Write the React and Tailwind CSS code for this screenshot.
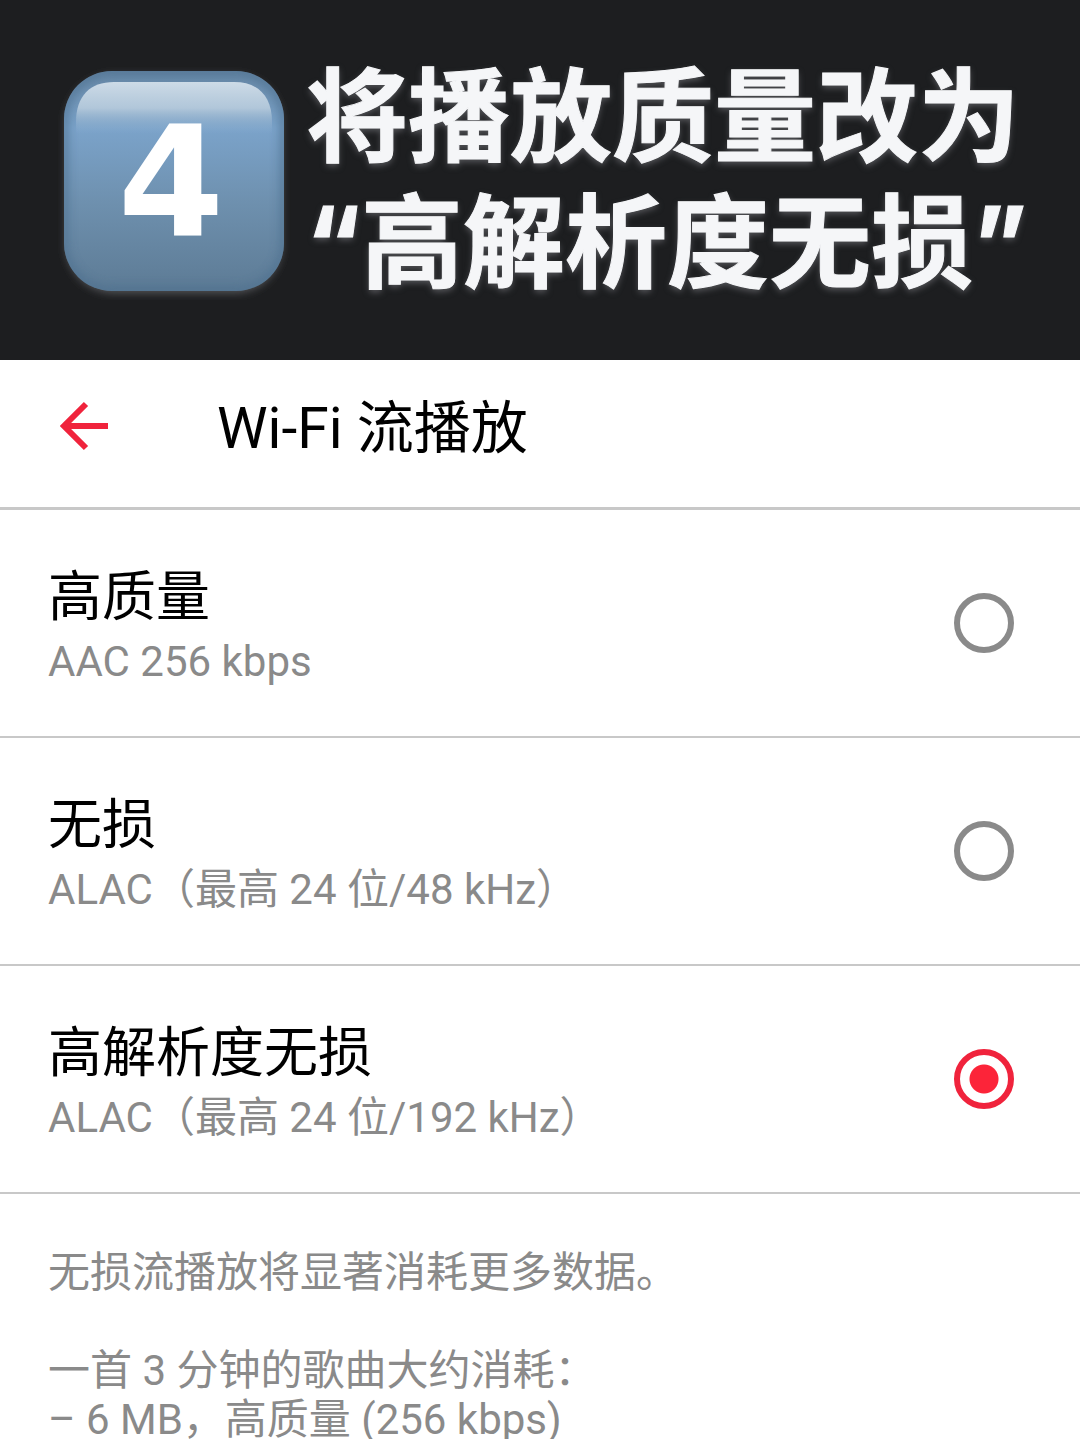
import React, { useState } from "react";

const OPTIONS = [
  { id: "high", title: "高质量", detail: "AAC 256 kbps" },
  { id: "lossless", title: "无损", detail: "ALAC（最高 24 位/48 kHz）" },
  { id: "hires", title: "高解析度无损", detail: "ALAC（最高 24 位/192 kHz）" },
];

function StepBadge() {
  return (
    <svg className="w-[240px] h-[240px] shrink-0" viewBox="0 0 240 240" role="img" aria-labelledby="step-number">
      <defs>
        <linearGradient id="keycap" x1="0" y1="0" x2="0" y2="1">
          <stop offset="0" stopColor="#6687a5" />
          <stop offset="0.26" stopColor="#7ba3ca" />
          <stop offset="0.6" stopColor="#6e90ae" />
          <stop offset="1" stopColor="#5d7b95" />
        </linearGradient>
        <linearGradient id="shine" x1="0" y1="0" x2="0" y2="1">
          <stop offset="0" stopColor="#cddbe7" />
          <stop offset="0.5" stopColor="#b8ccdd" stopOpacity="0.9" />
          <stop offset="1" stopColor="#8fb0cf" stopOpacity="0" />
        </linearGradient>
        <filter id="soft" x="-20%" y="-20%" width="140%" height="140%">
          <feGaussianBlur stdDeviation="4" />
        </filter>
        <clipPath id="key">
          <rect x="10" y="11" width="220" height="220" rx="48" />
        </clipPath>
      </defs>
      <rect x="12" y="15" width="216" height="218" rx="48" fill="#55565a" filter="url(#soft)" />
      <g clipPath="url(#key)">
        <rect x="10" y="11" width="220" height="220" fill="url(#keycap)" />
        <rect x="10" y="11" width="220" height="220" rx="48" fill="none" stroke="#4d708f" strokeWidth="10" opacity="0.6" filter="url(#soft)" />
      </g>
      <path d="M22 74V62C22 36 36 22 60 22H180C204 22 218 36 218 62V74Z" fill="url(#shine)" />
      <text id="step-number" x="117" y="175" textAnchor="middle" className="font-['DejaVu_Sans',sans-serif] text-[153px] font-bold" fill="#fff">4</text>
    </svg>
  );
}

function QualityOption({ option, checked, onSelect }) {
  return (
    <label className="flex items-center justify-between h-[228px] pl-12 pr-[66px] border-b-2 border-[#c8c8c8] cursor-pointer">
      <span className="flex flex-col pt-1.5">
        <span className="text-[54px] leading-[72px] text-black">{option.title}</span>
        <span className="text-[42px] leading-[56px] text-[#8a8a8a]">{option.detail}</span>
      </span>
      <input
        type="radio"
        name="quality"
        value={option.id}
        checked={checked}
        onChange={() => onSelect(option.id)}
        className="appearance-none w-[60px] h-[60px] shrink-0 rounded-full border-[6px] border-[#8a8a8a] checked:border-[#f0233c] checked:bg-[radial-gradient(circle,#fc2439_14px,transparent_15px)]"
      />
    </label>
  );
}

export default function App() {
  const [quality, setQuality] = useState("hires");

  return (
    <div className="h-screen overflow-hidden bg-white font-[Roboto,'Noto_Sans_CJK_SC',sans-serif]" lang="zh-CN">
      {/* Step banner */}
      <header className="flex items-center gap-3 bg-[#1d1e20] h-[360px] pl-[54px]">
        <StepBadge />
        <h1 className="font-[Inter,'Noto_Sans_CJK_SC',sans-serif] font-bold text-[102px] leading-[126px] text-[#f5f6f8] whitespace-nowrap [-webkit-text-stroke:1px_#f5f6f8] [text-shadow:0_3px_6px_#55565a]">
          将播放质量改为
          <br />
          “高解析度无损”
        </h1>
      </header>

      {/* App bar */}
      <div className="flex items-center h-[150px] pb-4 pl-[54px] border-b-[3px] border-[#c8c8c8]">
        <button type="button" aria-label="返回" className="w-[60px] h-[60px] mr-[103px] text-[#f0233c]">
          <svg viewBox="0 0 60 60" fill="none" stroke="currentColor" strokeWidth="6">
            <path d="M54 30H10M32 8L10 30L32 52" />
          </svg>
        </button>
        <h2 className="pt-1.5 text-[57px] leading-[72px] text-black">Wi-Fi 流播放</h2>
      </div>

      <main>
        <div role="radiogroup" aria-label="播放质量">
          {OPTIONS.map((option) => (
            <QualityOption key={option.id} option={option} checked={quality === option.id} onSelect={setQuality} />
          ))}
        </div>

        {/* Data usage note */}
        <div className="px-12 pt-[54px] text-[42px] leading-[49px] text-[#8a8a8a]">
          <p className="mb-[49px]">无损流播放将显著消耗更多数据。</p>
          <p>一首 3 分钟的歌曲大约消耗：</p>
          <p>– 6 MB，高质量 (256 kbps)</p>
        </div>
      </main>
    </div>
  );
}
